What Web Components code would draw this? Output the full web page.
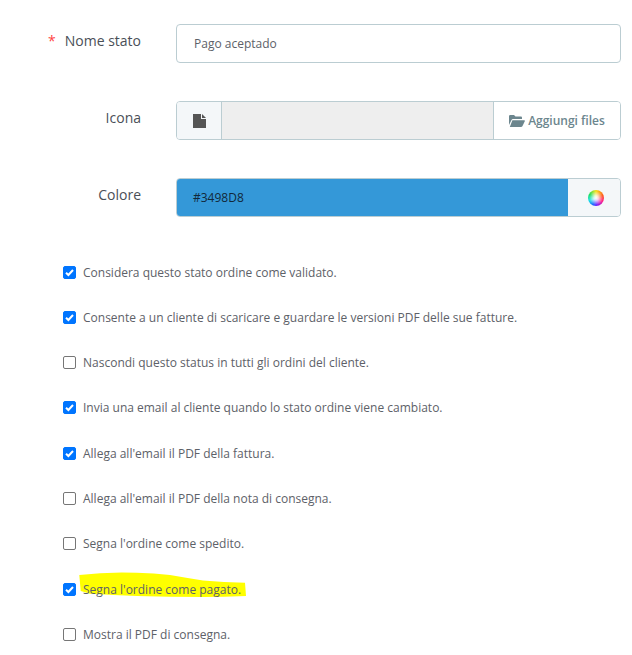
<!DOCTYPE html>
<html>
<head>
<meta charset="utf-8">
<title>Stato ordine</title>
<style>
    html, body { margin: 0; background: #fff; }
    body {
        width: 632px;
        height: 655px;
        overflow: hidden;
        font-family: "Open Sans", sans-serif;
        color: #363a41;
    }
    status-form { padding-top: 24px; }
</style>
</head>
<body>
<status-form>
    <form-row label="Nome stato" required>
        <div class="box text-box">Pago aceptado</div>
    </form-row>
    <form-row label="Icona">
        <file-field></file-field>
    </form-row>
    <form-row label="Colore">
        <color-field value="#3498D8"></color-field>
    </form-row>
    <check-list>
        <check-row checked>Considera questo stato ordine come validato.</check-row>
        <check-row checked>Consente a un cliente di scaricare e guardare le versioni PDF delle sue fatture.</check-row>
        <check-row>Nascondi questo status in tutti gli ordini del cliente.</check-row>
        <check-row checked>Invia una email al cliente quando lo stato ordine viene cambiato.</check-row>
        <check-row checked>Allega all'email il PDF della fattura.</check-row>
        <check-row>Allega all'email il PDF della nota di consegna.</check-row>
        <check-row>Segna l'ordine come spedito.</check-row>
        <check-row checked marked>Segna l'ordine come pagato.</check-row>
        <check-row>Mostra il PDF di consegna.</check-row>
    </check-list>
</status-form>

<script>
class StatusForm extends HTMLElement {
    constructor() {
        super();
        this.attachShadow({ mode: 'open' });
        this.shadowRoot.innerHTML = `
            <style>
                :host { display: flex; flex-direction: column; gap: 38px; box-sizing: border-box; }
            </style>
            <slot></slot>
        `;
    }
}

class FormRow extends HTMLElement {
    constructor() {
        super();
        this.attachShadow({ mode: 'open' });
    }

    connectedCallback() {
        const required = this.hasAttribute('required');
        this.shadowRoot.innerHTML = `
            <style>
                :host { display: flex; height: 39px; }
                .label {
                    width: 141px;
                    margin-right: 35px;
                    text-align: right;
                    font-size: 14px;
                    line-height: 19px;
                    padding-top: 7px;
                    color: #4a4f57;
                    box-sizing: border-box;
                }
                .star { color: #f44; margin-right: 9px; }
                .field { width: 445px; }
                ::slotted(.box) {
                    height: 39px;
                    box-sizing: border-box;
                    border: 1px solid #bbcdd2;
                    border-radius: 4px;
                    background: #fff;
                    padding: 0 17px;
                    font-size: 12px;
                    line-height: 37px;
                    color: #5d6168;
                }
            </style>
            <div class="label">${required ? '<span class="star">*</span>' : ''}${this.getAttribute('label')}</div>
            <div class="field"><slot></slot></div>
        `;
    }
}

class FileField extends HTMLElement {
    constructor() {
        super();
        this.attachShadow({ mode: 'open' });
        this.shadowRoot.innerHTML = `
            <style>
                :host {
                    display: flex;
                    height: 39px;
                    box-sizing: border-box;
                    border: 1px solid #bbcdd2;
                    border-radius: 4px;
                    overflow: hidden;
                }
                .addon {
                    width: 45px;
                    box-sizing: border-box;
                    display: flex;
                    align-items: center;
                    justify-content: center;
                    background: #f4f7f9;
                    border-right: 1px solid #bbcdd2;
                }
                .name { flex: 1; background: #eee; }
                .btn {
                    width: 127px;
                    box-sizing: border-box;
                    display: flex;
                    align-items: center;
                    justify-content: center;
                    gap: 3px;
                    border-left: 1px solid #bbcdd2;
                    color: #6c868e;
                    font-size: 12px;
                    font-weight: 600;
                    background: #fff;
                }
            </style>
            <div class="addon">
                <svg width="13" height="14" viewBox="0 0 13 14">
                    <path d="M0 0H8V5H13V14H0Z M9 0L13 4H9Z" fill="#555"/>
                </svg>
            </div>
            <div class="name"></div>
            <div class="btn">
                <svg width="16" height="12" viewBox="0 0 16 12">
                    <path d="M0 1.2Q0 0 1.2 0H5L6.5 1.6H12Q13 1.6 13 2.8V4H4Q3 4 2.5 5L0 10Z M3.4 5.2H15.2Q16.2 5.2 15.8 6.2L13.4 11.2Q13 12 12 12H.8Z" fill="#6c868e"/>
                </svg>
                <span>Aggiungi files</span>
            </div>
        `;
    }
}

class ColorField extends HTMLElement {
    constructor() {
        super();
        this.attachShadow({ mode: 'open' });
    }

    connectedCallback() {
        const value = this.getAttribute('value');
        this.shadowRoot.innerHTML = `
            <style>
                :host {
                    display: flex;
                    height: 39px;
                    box-sizing: border-box;
                    border: 1px solid #bbcdd2;
                    border-radius: 4px;
                    overflow: hidden;
                }
                .value {
                    flex: 1;
                    background: ${value};
                    padding-left: 16px;
                    font-size: 12px;
                    line-height: 37px;
                    color: #12283a;
                }
                .swatch {
                    width: 52px;
                    box-sizing: border-box;
                    padding-left: 3px;
                    display: flex;
                    align-items: center;
                    justify-content: center;
                    background: #f4f7f9;
                }
                .wheel {
                    width: 16px;
                    height: 16px;
                    border-radius: 50%;
                    background:
                        radial-gradient(circle, #fff 0, rgba(255,255,255,.8) 20%, rgba(255,255,255,0) 62%),
                        conic-gradient(#f5e013, #ff5a1f 70deg, #ff1f8f 120deg, #6a22ff 175deg, #1f6bff 205deg, #19e0e6 250deg, #1fe05a 300deg, #f5e013);
                }
            </style>
            <div class="value">${value}</div>
            <div class="swatch"><div class="wheel"></div></div>
        `;
    }
}

class CheckList extends HTMLElement {
    constructor() {
        super();
        this.attachShadow({ mode: 'open' });
        this.shadowRoot.innerHTML = `
            <style>
                :host {
                    display: flex;
                    flex-direction: column;
                    gap: 27.33px;
                    padding: 8px 0 0 63px;
                }
            </style>
            <slot></slot>
        `;
    }
}

class CheckRow extends HTMLElement {
    constructor() {
        super();
        this.attachShadow({ mode: 'open' });
    }

    connectedCallback() {
        const checked = this.hasAttribute('checked');
        const marked = this.hasAttribute('marked');
        this.shadowRoot.innerHTML = `
            <style>
                :host {
                    display: flex;
                    align-items: center;
                    height: 18px;
                    position: relative;
                    font-size: 12px;
                    color: #5d6168;
                }
                .box {
                    width: 13px;
                    height: 13px;
                    box-sizing: border-box;
                    border-radius: 2px;
                    margin-right: 7px;
                    flex: none;
                    display: flex;
                    background: #fff;
                    border: 1px solid #767676;
                }
                .box.on { background: #0075ff; border-color: #0075ff; }
                .mark {
                    position: absolute;
                    left: 16px;
                    top: -8px;
                }
                .text { position: relative; }
            </style>
            <span class="box ${checked ? 'on' : ''}">
                ${checked ? '<svg width="11" height="11" viewBox="0 0 11 11"><path d="M2 5.7L4.4 8L9 3" fill="none" stroke="#fff" stroke-width="2"/></svg>' : ''}
            </span>
            ${marked ? '<svg class="mark" width="170" height="30" viewBox="0 0 170 30"><path d="M.3 3Q28 -.5 57.7 .7Q75 1 91 3Q108 6 124 8.4Q145 10 166 10.7L167 24Q145 25 124 25Q90 25 57.7 24Q35 23 11 21.7L1.7 19Z" fill="#ffff00"/></svg>' : ''}
            <span class="text"><slot></slot></span>
        `;
    }
}

customElements.define('status-form', StatusForm);
customElements.define('form-row', FormRow);
customElements.define('file-field', FileField);
customElements.define('color-field', ColorField);
customElements.define('check-list', CheckList);
customElements.define('check-row', CheckRow);
</script>
</body>
</html>
